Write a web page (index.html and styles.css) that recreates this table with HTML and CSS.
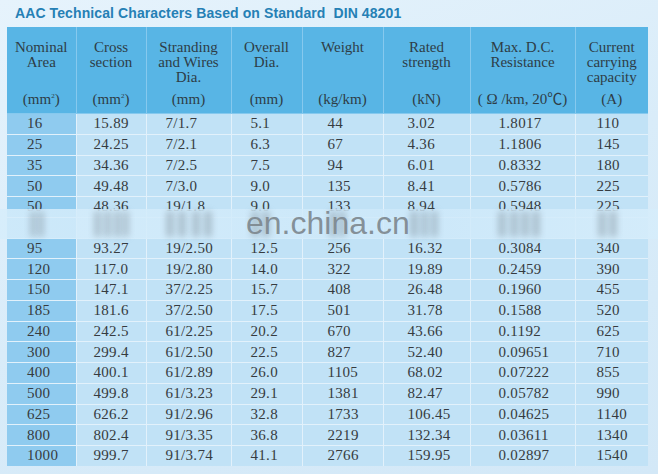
FILE: index.html
```html
<!DOCTYPE html>
<html>
<head>
<meta charset="utf-8">
<link rel="stylesheet" href="styles.css">
</head>
<body>
<div class="page">
  <h1 class="title">AAC Technical Characters Based on Standard&nbsp; DIN 48201</h1>
  <div class="table-wrap">
    <table class="spec">
      <colgroup>
        <col class="c1"><col class="c2"><col class="c3"><col class="c4">
        <col class="c5"><col class="c6"><col class="c7"><col class="c8">
      </colgroup>
      <thead>
        <tr>
          <th><div class="hname">Nominal<br>Area</div><div class="hunit">(mm<sup>2</sup>)</div></th>
          <th><div class="hname">Cross<br>section</div><div class="hunit">(mm<sup>2</sup>)</div></th>
          <th><div class="hname">Stranding<br>and Wires<br>Dia.</div><div class="hunit">(mm)</div></th>
          <th><div class="hname">Overall<br>Dia.</div><div class="hunit">(mm)</div></th>
          <th><div class="hname">Weight</div><div class="hunit">(kg/km)</div></th>
          <th><div class="hname">Rated<br>strength</div><div class="hunit">(kN)</div></th>
          <th><div class="hname">Max. D.C.<br>Resistance</div><div class="hunit">( Ω /km, 20℃)</div></th>
          <th><div class="hname">Current<br>carrying<br>capacity</div><div class="hunit">(A)</div></th>
        </tr>
      </thead>
      <tbody>
        <tr><td>16</td><td>15.89</td><td>7/1.7</td><td>5.1</td><td>44</td><td>3.02</td><td>1.8017</td><td>110</td></tr>
        <tr><td>25</td><td>24.25</td><td>7/2.1</td><td>6.3</td><td>67</td><td>4.36</td><td>1.1806</td><td>145</td></tr>
        <tr><td>35</td><td>34.36</td><td>7/2.5</td><td>7.5</td><td>94</td><td>6.01</td><td>0.8332</td><td>180</td></tr>
        <tr><td>50</td><td>49.48</td><td>7/3.0</td><td>9.0</td><td>135</td><td>8.41</td><td>0.5786</td><td>225</td></tr>
        <tr><td>50</td><td>48.36</td><td>19/1.8</td><td>9.0</td><td>133</td><td>8.94</td><td>0.5948</td><td>225</td></tr>
        <tr class="hidden-row"><td></td><td></td><td></td><td></td><td></td><td></td><td></td><td></td></tr>
        <tr><td>95</td><td>93.27</td><td>19/2.50</td><td>12.5</td><td>256</td><td>16.32</td><td>0.3084</td><td>340</td></tr>
        <tr><td>120</td><td>117.0</td><td>19/2.80</td><td>14.0</td><td>322</td><td>19.89</td><td>0.2459</td><td>390</td></tr>
        <tr><td>150</td><td>147.1</td><td>37/2.25</td><td>15.7</td><td>408</td><td>26.48</td><td>0.1960</td><td>455</td></tr>
        <tr><td>185</td><td>181.6</td><td>37/2.50</td><td>17.5</td><td>501</td><td>31.78</td><td>0.1588</td><td>520</td></tr>
        <tr><td>240</td><td>242.5</td><td>61/2.25</td><td>20.2</td><td>670</td><td>43.66</td><td>0.1192</td><td>625</td></tr>
        <tr><td>300</td><td>299.4</td><td>61/2.50</td><td>22.5</td><td>827</td><td>52.40</td><td>0.09651</td><td>710</td></tr>
        <tr><td>400</td><td>400.1</td><td>61/2.89</td><td>26.0</td><td>1105</td><td>68.02</td><td>0.07222</td><td>855</td></tr>
        <tr><td>500</td><td>499.8</td><td>61/3.23</td><td>29.1</td><td>1381</td><td>82.47</td><td>0.05782</td><td>990</td></tr>
        <tr><td>625</td><td>626.2</td><td>91/2.96</td><td>32.8</td><td>1733</td><td>106.45</td><td>0.04625</td><td>1140</td></tr>
        <tr><td>800</td><td>802.4</td><td>91/3.35</td><td>36.8</td><td>2219</td><td>132.34</td><td>0.03611</td><td>1340</td></tr>
        <tr><td>1000</td><td>999.7</td><td>91/3.74</td><td>41.1</td><td>2766</td><td>159.95</td><td>0.02897</td><td>1540</td></tr>
      </tbody>
    </table>
  </div>
  <div class="watermark">
    <span class="blob" style="left:30px;width:6px"></span>
    <span class="blob" style="left:38px;width:6px"></span>
    <span class="blob" style="left:94px;width:7px"></span>
    <span class="blob" style="left:104px;width:7px"></span>
    <span class="blob" style="left:114px;width:7px"></span>
    <span class="blob" style="left:123px;width:6px"></span>
    <span class="blob" style="left:166px;width:8px"></span>
    <span class="blob" style="left:178px;width:8px"></span>
    <span class="blob" style="left:192px;width:8px"></span>
    <span class="blob" style="left:204px;width:8px"></span>
    <span class="blob" style="left:251px;width:8px"></span>
    <span class="blob" style="left:262px;width:8px"></span>
    <span class="blob" style="left:329px;width:8px"></span>
    <span class="blob" style="left:339px;width:7px"></span>
    <span class="blob" style="left:410px;width:8px"></span>
    <span class="blob" style="left:421px;width:7px"></span>
    <span class="blob" style="left:431px;width:7px"></span>
    <span class="blob" style="left:498px;width:8px"></span>
    <span class="blob" style="left:510px;width:8px"></span>
    <span class="blob" style="left:521px;width:8px"></span>
    <span class="blob" style="left:532px;width:8px"></span>
    <span class="blob" style="left:598px;width:8px"></span>
    <span class="blob" style="left:609px;width:8px"></span>
    <span class="wm-text">en.china.cn</span>
  </div>
</div>
</body>
</html>
```

FILE: styles.css
```css
html, body {
  margin: 0;
  padding: 0;
}
body {
  width: 658px;
  height: 474px;
  overflow: hidden;
  background: linear-gradient(160deg, #e6f3fc 0%, #d9ecf9 50%, #d3e8f7 100%);
}
.page {
  position: relative;
  width: 658px;
  height: 474px;
}
.title {
  margin: 0;
  padding: 5px 0 0 15px;
  height: 22px;
  font-family: "Liberation Sans", Arial, sans-serif;
  font-weight: bold;
  font-size: 14px;
  line-height: 16px;
  color: #2580b5;
  letter-spacing: 0.1px;
}
.table-wrap {
  padding-left: 7px;
}
.spec {
  border-collapse: collapse;
  table-layout: fixed;
  width: 641px;
  font-family: "Liberation Serif", "Times New Roman", "Noto Sans CJK SC", serif;
  font-size: 15px;
  color: #363b40;
}
.c1 { width: 69px; }
.c2 { width: 70px; }
.c3 { width: 85px; }
.c4 { width: 71px; }
.c5 { width: 81px; }
.c6 { width: 87px; }
.c7 { width: 105px; }
.c8 { width: 73px; }

.spec th {
  background: #58b5e5;
  border: 1px solid #86c9ee;
  border-top: none;
  font-weight: normal;
  vertical-align: top;
  text-align: center;
  padding: 13px 0 6px;
  height: 66px;
  color: #2e3d47;
  line-height: 15px;
}
.spec th:first-child { border-left: none; }
.spec th:last-child { border-right: none; }
.hname {
  height: 45px;
}
.hunit {
  margin-top: 7px;
  height: 15px;
  white-space: nowrap;
}
.hunit sup {
  font-size: 7px;
  vertical-align: top;
  line-height: 7px;
  position: relative;
  top: 1px;
}
.spec td {
  background: #c1e2f6;
  border: 1px solid #e2f1fb;
  height: 19.75px;
  padding: 0;
  line-height: 19px;
  text-align: left;
  white-space: nowrap;
  letter-spacing: 0.3px;
}
.spec td:first-child {
  background: #8fcbef;
  border-left: none;
}
.spec td:last-child { border-right: none; }
.spec tr:last-child td { border-bottom: none; }
.spec td:nth-child(1) { padding-left: 20px; }
.spec td:nth-child(2) { padding-left: 17px; }
.spec td:nth-child(3) { padding-left: 19px; }
.spec td:nth-child(4) { padding-left: 19px; }
.spec td:nth-child(5) { padding-left: 25px; }
.spec td:nth-child(6) { padding-left: 24px; }
.spec td:nth-child(7) { padding-left: 28px; }
.spec td:nth-child(8) { padding-left: 21px; }

.watermark {
  position: absolute;
  left: 0;
  top: 209px;
  width: 658px;
  height: 30px;
  background: linear-gradient(90deg, rgba(214,237,251,0.88), rgba(206,233,250,0.82) 60%, rgba(214,237,251,0.88));
}
.blob {
  position: absolute;
  top: 2px;
  height: 26px;
  background: rgba(110, 125, 135, 0.36);
  filter: blur(3px);
  border-radius: 3px;
}
.wm-text {
  position: absolute;
  left: 246px;
  top: -4px;
  font-family: "Liberation Sans", Arial, sans-serif;
  font-size: 32px;
  line-height: 37px;
  color: rgba(125, 135, 142, 0.92);
  white-space: nowrap;
}
```
